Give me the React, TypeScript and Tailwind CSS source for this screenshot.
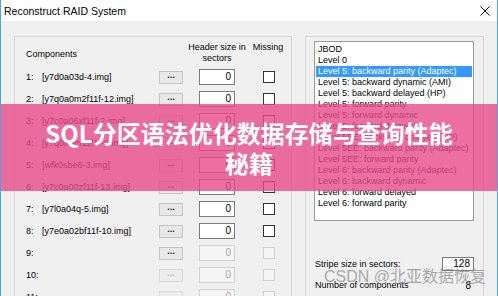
const FONT = "font-['Liberation_Sans','Noto_Sans_CJK_SC',Arial,sans-serif]";

interface Row {
  n: string;
  file: string;
  enabled: boolean;
  btn: boolean;
}

const ROWS: Row[] = [
  { n: '1:', file: '[y7d0a03d-4.img]', enabled: true, btn: true },
  { n: '2:', file: '[y7q0a0m2f11f-12.img]', enabled: true, btn: true },
  { n: '3:', file: '[y7c0a06xf11f-2.img]', enabled: true, btn: true },
  { n: '4:', file: '[y7q0a0m11f1f-9.img]', enabled: true, btn: true },
  { n: '5:', file: '[wfk0sbe8-3.img]', enabled: true, btn: true },
  { n: '6:', file: '[y7c0a00zf11f-13.img]', enabled: true, btn: true },
  { n: '7:', file: '[y7l0a04q-5.img]', enabled: true, btn: true },
  { n: '8:', file: '[y7e0a02bf11f-10.img]', enabled: true, btn: true },
  { n: '9:', file: '', enabled: false, btn: true },
  { n: '10:', file: '', enabled: false, btn: false },
  { n: '11:', file: '', enabled: false, btn: false },
];

const LEVELS = [
  'JBOD',
  'Level 0',
  'Level 5: backward parity (Adaptec)',
  'Level 5: backward dynamic (AMI)',
  'Level 5: backward delayed (HP)',
  'Level 5: forward parity',
  'Level 5: forward dynamic',
  'Level 5: forward delayed',
  'Level 5EE: backward delayed (HP)',
  'Level 5EE: backward parity (Adaptec)',
  'Level 5EE: forward parity',
  'Level 6: backward parity (Adaptec)',
  'Level 6: backward dynamic',
  'Level 6: forward delayed',
  'Level 6: forward parity',
];

function ComponentRow({ row }: { row: Row }) {
  return (
    <div className="flex h-[22px] items-center">
      <span className="w-[16px] shrink-0">{row.n}</span>
      <span className="w-[117px] shrink-0 whitespace-nowrap">{row.file}</span>
      <div
        className={`flex h-[13px] w-[24px] shrink-0 items-center justify-center border text-[9px] font-bold leading-none ${
          row.btn ? 'border-[#c4c4c4] bg-[#e8e8e8] text-[#222]' : 'border-[#dadada] bg-[#ededed] text-[#b4b4b4]'
        }`}
      >
        <span className="-mt-[3px]">...</span>
      </div>
      <div className="w-[16px] shrink-0" />
      <div
        className={`h-[16px] w-[36px] shrink-0 border pr-[3px] text-right text-[10px] leading-[14px] ${
          row.enabled ? 'border-[#7a7a7a] bg-white text-black' : 'border-[#d2d2d2] bg-[#f5f5f5] text-[#a6a6a6]'
        }`}
      >
        0
      </div>
      <div className="w-[28px] shrink-0" />
      <div
        className={`h-[12px] w-[12px] shrink-0 border ${
          row.enabled ? 'border-[#333] bg-white' : 'border-[#d0d0d0] bg-[#f5f5f5]'
        }`}
      />
    </div>
  );
}

export default function App() {
  return (
    <div className={`relative h-[296px] w-[498px] overflow-hidden border-x border-[#4aa6d9] bg-[#f0f0f0] text-[9px] leading-[11px] text-black ${FONT}`}>
      {/* title bar */}
      <div className="flex h-[21px] items-center justify-between bg-white pl-[3px] pr-[7px]">
        <span className="text-[10.5px] leading-[12px]">Reconstruct RAID System</span>
        <svg width="10" height="10" viewBox="0 0 10 10" className="mt-[1px]">
          <path d="M0.5 0.5 L9.5 9.5 M9.5 0.5 L0.5 9.5" stroke="#111" strokeWidth="1" />
        </svg>
      </div>

      <div className="flex gap-[13px] px-[13px] pt-[15px]">
        {/* components group */}
        <div className="h-[300px] w-[278px] shrink-0 border border-[#d6d6d6] pl-[11px]">
          <div className="flex pt-[5px]">
            <span className="mt-[7px] w-[157px] shrink-0">Components</span>
            <div className="flex w-[68px] shrink-0 flex-col items-center">
              <span>Header size in</span>
              <span>sectors</span>
            </div>
            <span className="w-[34px] shrink-0 text-center">Missing</span>
          </div>
          <div className="mt-[2px] flex flex-col">
            {ROWS.map((r) => (
              <ComponentRow key={r.n} row={r} />
            ))}
          </div>
        </div>

        {/* raid level group */}
        <div className="h-[300px] w-[179px] shrink-0 border border-[#d6d6d6] pl-[8px] pr-[9px] pt-[4px]">
          <div className="h-[180px] w-[160px] border border-[#9a9a9a] bg-white px-px pt-[2px]">
            {LEVELS.map((l, i) => (
              <div
                key={l}
                className={`h-[11px] whitespace-nowrap pl-[2px] ${i === 2 ? 'bg-[#3399ff] text-white' : ''}`}
              >
                {l}
              </div>
            ))}
          </div>
          <div className="mt-[36px] flex h-[14px] w-[160px] items-center justify-between pl-px">
            <span>Stripe size in sectors:</span>
            <div className="h-[14px] w-[32px] border border-[#7a7a7a] bg-white pr-[3px] text-right text-[10px] leading-[12px]">
              128
            </div>
          </div>
          <div className="mt-[9px] flex w-[160px] items-center justify-between pl-px pr-[3px]">
            <span>Number of components</span>
            <span className="text-[10px]">8</span>
          </div>
        </div>
      </div>

      {/* watermark */}
      <div className="absolute left-[323px] top-[268px] whitespace-nowrap text-[16px] leading-[18px] text-[#8f8f8f]/75">
        CSDN @北亚数据恢复
      </div>

      {/* pink title banner */}
      <div className="absolute left-0 right-0 top-[104px] flex h-[87px] flex-col items-center justify-center bg-[#e84b8b]/80 font-['Noto_Sans_CJK_SC',sans-serif] text-[24px] font-bold leading-[30px] text-white">
        <span>SQL分区语法优化数据存储与查询性能</span>
        <span>秘籍</span>
      </div>
    </div>
  );
}
